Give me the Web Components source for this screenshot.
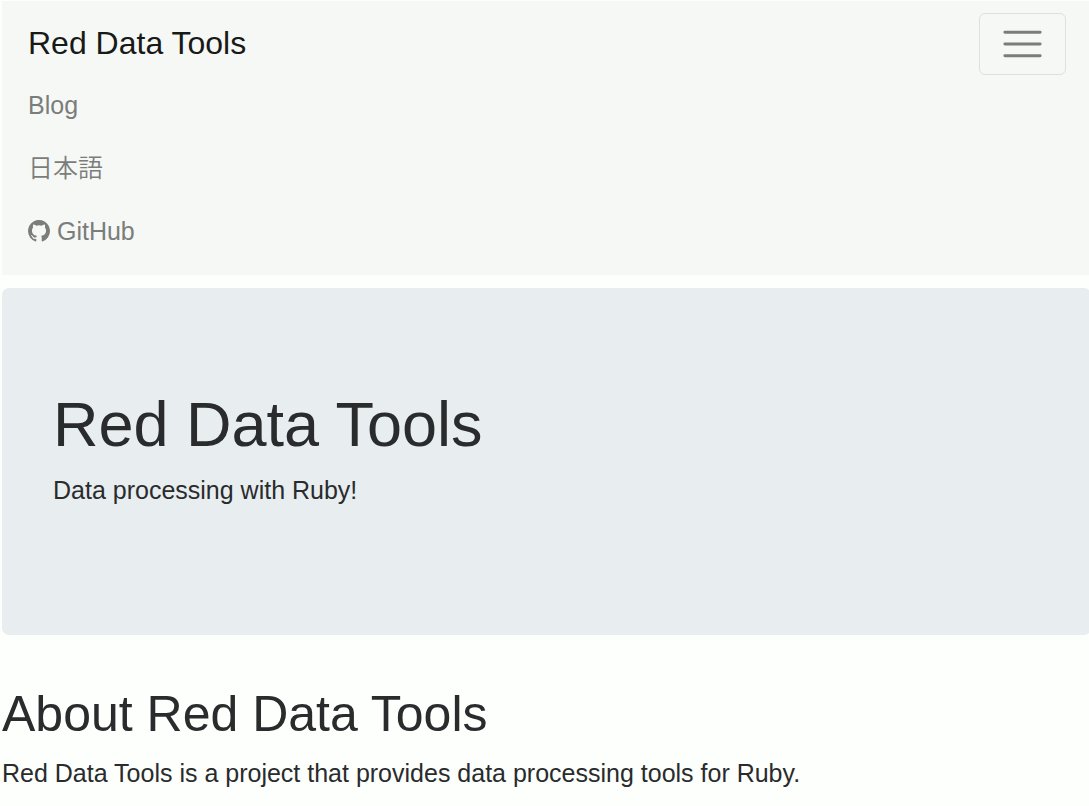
<!DOCTYPE html>
<html lang="en">
<head>
<meta charset="utf-8">
<meta name="viewport" content="width=device-width, initial-scale=1">
<title>Red Data Tools</title>
<style>
  html { overflow-x: hidden; background: #fdfffd; }
  body {
    margin: 1px -2px 0 2px;
    color: #292b2c;
    font: 25px/38px "Liberation Sans", "Noto Sans CJK JP", sans-serif;
  }
  [lang="ja"] { font-weight: 350; }
</style>
</head>
<body>
<site-navbar>
  <span slot="brand">Red Data Tools</span>
  <nav-link href="#blog">Blog</nav-link>
  <nav-link href="#ja"><span lang="ja">日本語</span></nav-link>
  <nav-link href="#github"><github-icon></github-icon> GitHub</nav-link>
</site-navbar>
<main>
  <hero-banner>
    <span slot="title">Red Data Tools</span>
    Data processing with Ruby!
  </hero-banner>
  <content-section>
    <span slot="title">About Red Data Tools</span>
    Red Data Tools is a project that provides data processing tools for Ruby.
  </content-section>
</main>
<script>
  const define = (name, html, setup) => {
    const template = document.createElement('template');
    template.innerHTML = html;
    customElements.define(name, class extends HTMLElement {
      constructor() {
        super();
        this.attachShadow({ mode: 'open' }).append(template.content.cloneNode(true));
      }
      connectedCallback() { if (setup) setup(this, this.shadowRoot); }
    });
  };

  define('site-navbar', `
    <style>
      :host { display: block; background: #f6f8f6; padding: 12px 25px 11px 26px; }
      .bar { display: flex; align-items: flex-start; justify-content: space-between; }
      .brand { padding: 6px 0; color: #181a18; font-size: 32px; line-height: 48px; text-decoration: none; }
      button {
        display: block; box-sizing: border-box; padding: 5px 19px;
        background: none; border: 1px solid #dee0de; border-radius: 6px; cursor: pointer;
      }
      svg { display: block; width: 47px; height: 50px; }
      .links { display: flex; flex-direction: column; }
      .links[hidden] { display: none; }
    </style>
    <nav>
      <div class="bar">
        <a class="brand" href="#"><slot name="brand"></slot></a>
        <button type="button" aria-label="Toggle navigation" aria-expanded="true">
          <svg viewBox="0 0 32 32" aria-hidden="true"><path d="M4 8h24M4 16h24M4 24h24" fill="none" stroke="#7b7d7b" stroke-width="2" stroke-linecap="round" stroke-miterlimit="10"/></svg>
        </button>
      </div>
      <div class="links"><slot></slot></div>
    </nav>`, (host, root) => {
    const button = root.querySelector('button');
    const links = root.querySelector('.links');
    button.onclick = () => {
      links.hidden = !links.hidden;
      button.setAttribute('aria-expanded', String(!links.hidden));
    };
  });

  define('nav-link', `
    <style>
      :host { display: block; }
      a { display: block; height: 38px; padding: 11px 0 14px; color: #7b7d7b; text-decoration: none; }
    </style>
    <a><slot></slot></a>`, (host, root) => {
    root.querySelector('a').setAttribute('href', host.getAttribute('href'));
  });

  define('github-icon', `
    <style>
      :host { display: inline-block; width: 22px; height: 22px; vertical-align: -2px; }
      svg { display: block; width: 100%; height: 100%; }
    </style>
    <svg viewBox="0 0 1536 1536" aria-hidden="true"><path fill="currentColor" d="M768 0q209 0 385.500 103t279.500 279.500 103 385.500q0 251-146.500 451.500t-378.500 277.500q-27 5-40-7t-13-30q0-3 .5-76.500t.5-134.500q0-97-52-142 57-6 102.500-18t94-39 81-66.500 53-105 20.500-150.500q0-119-79-206 37-91-8-204-28-9-81 11t-92 44l-38 24q-93-26-192-26t-192 26q-16-11-42.500-27t-83.500-38.500-85-13.500q-45 113-8 204-79 87-79 206 0 85 20.500 150t52.500 105 80.500 67 94 39 102.500 18q-39 36-49 103-21 10-45 15t-57 5-65.500-21.500-55.500-62.500q-19-32-48.500-52t-49.500-24l-20-3q-21 0-29 4.500t-5 11.500 9 14 13 12l7 5q22 10 43.500 38t31.500 51l10 23q13 38 44 61.500t67 30 69.500 7 55.500-3.500l23-4q0 38 .5 88.500t.5 54.500q0 18-13 30t-40 7q-232-77-378.500-277.500t-146.500-451.500q0-209 103-385.500t279.500-279.500 385.500-103z"/></svg>`);

  define('hero-banner', `
    <style>
      :host { display: block; margin-top: 13px; padding: 100px 51px; background: #e8edf0; border-radius: 7px; }
      h1 { margin: 0 0 11px; font-size: 63px; line-height: 72px; font-weight: 400; }
      p { margin: 0 0 26px; }
    </style>
    <h1><slot name="title"></slot></h1>
    <p><slot></slot></p>`);

  define('content-section', `
    <style>
      :host { display: block; margin-top: 52px; }
      h2 { margin: 0 0 12px; font-size: 50px; line-height: 55px; font-weight: 400; }
      p { margin: 0; }
    </style>
    <section>
      <h2><slot name="title"></slot></h2>
      <p><slot></slot></p>
    </section>`);
</script>
</body>
</html>
